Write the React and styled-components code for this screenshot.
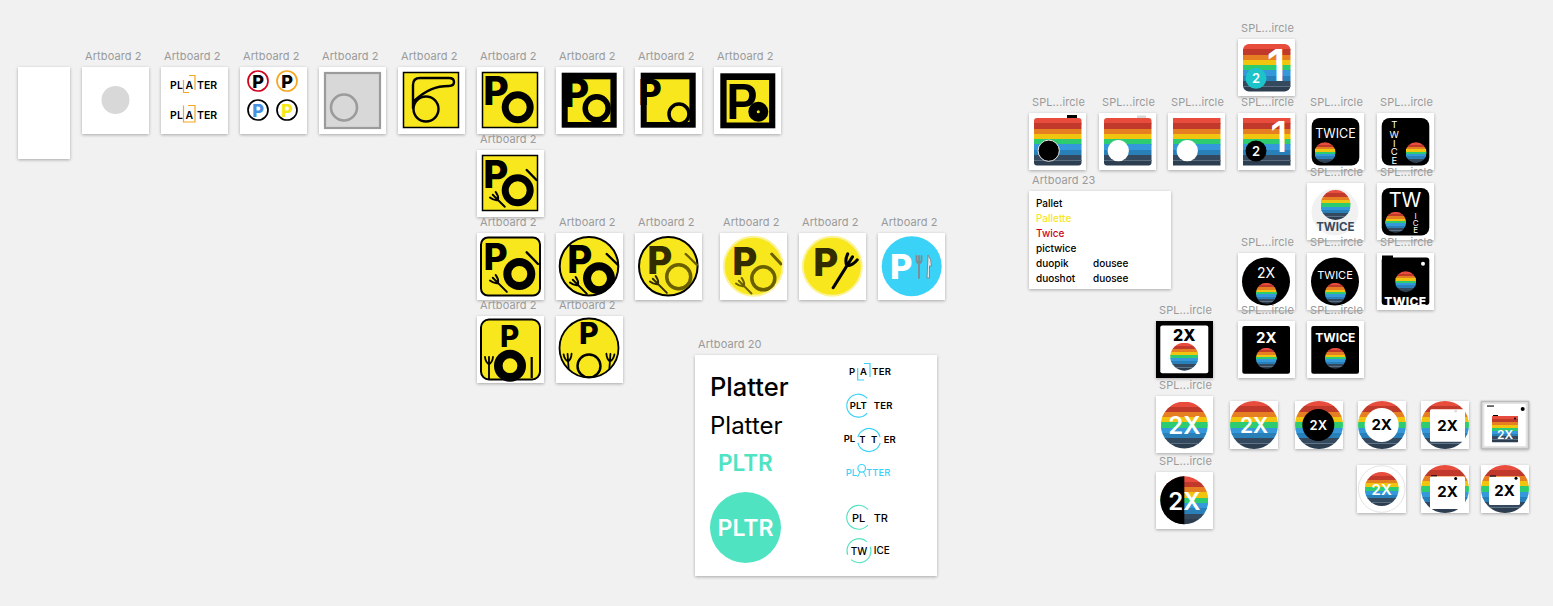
import React, { useId } from 'react';
import styled, { createGlobalStyle } from 'styled-components';

const Y = '#f8e71c';
const K = '#000';
const OL = '#6b6000';
const DK = '#332c00';
const TEAL = '#50e3c2';
const CY = '#3ad3f7';
const BANDS = ['#e74c3c', '#c0392b', '#e67e22', '#f1c40f', '#2ecc71', '#3498db', '#2980b9', '#34495e', '#2c3e50'];

const Global = createGlobalStyle`
  html, body { margin: 0; padding: 0; background: #f1f1f1; overflow: hidden; }
  body { font-family: Inter, "Noto Sans", sans-serif; }
`;

const Canvas = styled.main`
  position: relative;
  width: 1553px;
  height: 606px;
  background: #f1f1f1;
  overflow: hidden;
`;

const Board = styled.section`
  position: absolute;
  left: ${(p) => p.$x}px;
  top: ${(p) => p.$y}px;
  width: ${(p) => p.$w}px;
  height: ${(p) => p.$h}px;
  background: ${(p) => p.$bg || '#fff'};
  box-shadow: 0 1px 3px rgba(0, 0, 0, 0.3);
`;

const Label = styled.span`
  position: absolute;
  left: 3px;
  bottom: 100%;
  margin-bottom: 4px;
  font-size: 11px;
  line-height: 13px;
  letter-spacing: 0.1px;
  white-space: nowrap;
  color: #9a9a9a;
`;

const Art = styled.svg`
  display: block;
  width: 100%;
  height: 100%;
  overflow: visible;
`;

const Ink = styled.text`
  font-family: ${(p) => p.$family || 'Inter, "Noto Sans", sans-serif'};
`;

const Names = styled.div`
  display: grid;
  grid-template-columns: 57px 1fr;
  grid-auto-rows: 15px;
  padding: 5px 7px;
  font-size: 10px;
  line-height: 15px;
  font-weight: 500;
  color: #000;
`;

const Name = styled.span`
  grid-column: ${(p) => (p.$solo ? '1 / -1' : 'auto')};
  color: ${(p) => p.$color || '#000'};
`;

const Sheet = styled.div`
  display: grid;
  grid-template-columns: 130px 112px;
  height: 100%;
`;

const Wordmarks = styled.div`
  display: flex;
  flex-direction: column;
  align-items: flex-start;
  padding: 18px 0 0 15px;
`;

const Word = styled.div`
  font-size: ${(p) => p.$size}px;
  font-weight: ${(p) => p.$weight};
  line-height: 28px;
  color: #000;
  margin-bottom: ${(p) => p.$after}px;
`;

const Short = styled.div`
  font-size: 22.5px;
  font-weight: 600;
  line-height: 26px;
  color: ${TEAL};
  margin: 0 0 16px 8px;
`;

const Badge = styled.div`
  width: 71px;
  height: 71px;
  border-radius: 50%;
  background: ${TEAL};
  color: #fff;
  display: flex;
  align-items: center;
  justify-content: center;
  font-size: 23px;
  font-weight: 600;
`;

const Mark = ({ x, cy, size, weight = 600, fill = K, anchor = 'middle', children, spacing }) => (
  <Ink x={x} y={cy + size * 0.364} fontSize={size} fontWeight={weight} fill={fill} textAnchor={anchor} letterSpacing={spacing}>
    {children}
  </Ink>
);

const Pee = ({ x, top, h, fill = K, weight = 800 }) => {
  const size = h / 0.727;
  return (
    <Ink x={x - size * 0.07} y={top + h} fontSize={size} fontWeight={weight} fill={fill}>
      P
    </Ink>
  );
};

const Stripes = ({ x, w, top, h, clip }) => (
  <g clipPath={`url(#${clip})`} shapeRendering="crispEdges">
    {BANDS.map((c, i) => (
      <rect key={c} x={x} y={top + (i * h) / 9} width={w} height={h / 9 + 0.5} fill={c} />
    ))}
    <rect x={x} y={top + (8 * h) / 9 - 0.3} width={w} height={0.6} fill="#8aa0b0" opacity={0.5} />
  </g>
);

const useClip = () => useId().replace(/[^a-zA-Z0-9]/g, '') + 'c';

const Disc = ({ cx, cy, r }) => {
  const id = useClip();
  return (
    <>
      <clipPath id={id}>
        <circle cx={cx} cy={cy} r={r} />
      </clipPath>
      <Stripes x={cx - r} w={r * 2} top={cy - r} h={r * 2} clip={id} />
    </>
  );
};

const Strip = ({ x = 5, y = 5, w = 47.5, h = 47.5, rx = 0 }) => {
  const id = useClip();
  return (
    <>
      <clipPath id={id}>
        <rect x={x} y={y} width={w} height={h} rx={rx} />
      </clipPath>
      <Stripes x={x} w={w} top={y} h={h} clip={id} />
    </>
  );
};

const Fork = ({ x, y, rot, s = 1, c = K, w = 1.9, len = 11 }) => (
  <g transform={`translate(${x} ${y}) rotate(${rot}) scale(${s})`} fill="none" stroke={c} strokeWidth={w} strokeLinecap="round">
    <path d={`M-4 -6 Q-3.5 -1 0 1.5 Q3.5 -1 4 -6 M0 -6 V${len}`} />
  </g>
);

const Knife = ({ x1, y1, x2, y2, c = K, w = 2.4 }) => (
  <line x1={x1} y1={y1} x2={x2} y2={y2} stroke={c} strokeWidth={w} strokeLinecap="round" />
);

const Svg = ({ w = 67, h = 67, children }) => <Art viewBox={`0 0 ${w} ${h}`}>{children}</Art>;

const YBox = ({ x = 5.5, y = 5.5, s = 55, stroke = 1.5, rx = 0 }) => (
  <rect x={x} y={y} width={s} height={s} rx={rx} fill={Y} stroke={K} strokeWidth={stroke} />
);

const Clipped = ({ shape, children }) => {
  const id = useClip();
  return (
    <>
      <clipPath id={id}>{shape}</clipPath>
      <g clipPath={`url(#${id})`}>{children}</g>
    </>
  );
};

/* ---- first row ---- */
const GrayDot = () => (
  <Svg>
    <circle cx={33.5} cy={33} r={14} fill="#d8d8d8" />
  </Svg>
);

const Plater = () => (
  <Svg>
    {[0, 30].map((d) => (
      <g key={d}>
        <Mark x={9} cy={18 + d} size={10.5} anchor="start" spacing={0.3}>PL</Mark>
        <Mark x={28.3} cy={18 + d} size={10.5}>A</Mark>
        <Mark x={36} cy={18 + d} size={10.5} anchor="start">TER</Mark>
      </g>
    ))}
    <path d="M22.5 13 V25.5 H28 M28 8.5 H34 V23" fill="none" stroke="#f5a623" strokeWidth={1.2} />
    <path d="M22.5 38.5 V55 H34 V38.5 H27" fill="none" stroke="#f5a623" strokeWidth={1.2} />
  </Svg>
);

const FourP = () => (
  <Svg>
    {[
      [18, 14, '#d0021b', K],
      [47, 14, '#f5a623', K],
      [18, 43, K, '#4a90e2'],
      [47, 43, K, Y],
    ].map(([x, y, s, f]) => (
      <g key={`${x}${y}`}>
        <circle cx={x} cy={y} r={10} fill="#fff" stroke={s} strokeWidth={1.7} />
        <Mark x={x} cy={y} size={18} weight={800} fill={f}>P</Mark>
      </g>
    ))}
  </Svg>
);

const GrayBox = () => (
  <Svg>
    <rect x={6} y={6} width={55} height={55} fill="#d8d8d8" stroke="#9b9b9b" strokeWidth={2.2} />
    <circle cx={25} cy={40.5} r={13} fill="none" stroke="#9b9b9b" strokeWidth={2.6} />
  </Svg>
);

const Swoosh = () => (
  <Svg>
    <YBox />
    <path d="M15 41 V18 Q15 11 22 11 H51 Q56 11 56 15 Q56 19 51 19 C38 19 28 23 16 34" fill="none" stroke={K} strokeWidth={2.4} strokeLinecap="round" />
    <circle cx={28} cy={42} r={12.5} fill="none" stroke={K} strokeWidth={2.4} />
  </Svg>
);

const PO = () => (
  <Svg>
    <YBox />
    <Pee x={9} top={9.6} h={28.5} />
    <circle cx={40.7} cy={40.3} r={12.5} fill="none" stroke={K} strokeWidth={7} />
  </Svg>
);

const BlackFrame = ({ x = 5.7, y = 5.7, s = 55, inX = 11.7, inY = 12.3, inS = 42.7, children }) => (
  <>
    <rect x={x} y={y} width={s} height={s} fill={K} />
    <rect x={inX} y={inY} width={inS} height={inS} fill={Y} />
    {children}
  </>
);

const POFramed = () => (
  <Svg>
    <BlackFrame>
      <Pee x={10} top={11} h={29} />
      <Clipped shape={<rect x={5.7} y={5.7} width={55} height={55} />}>
        <circle cx={40.7} cy={41.3} r={11.5} fill={Y} stroke={K} strokeWidth={5.5} />
      </Clipped>
    </BlackFrame>
  </Svg>
);

const PODrop = () => (
  <Svg>
    <BlackFrame>
      <Pee x={6} top={12} h={26} />
      <Clipped shape={<rect x={5.7} y={5.7} width={55} height={55} />}>
        <circle cx={44} cy={47} r={10} fill={Y} stroke={K} strokeWidth={3.5} />
      </Clipped>
    </BlackFrame>
  </Svg>
);

const PDot = () => (
  <Svg>
    <BlackFrame x={6.3} y={6.3} inX={12.6} inY={13} inS={42.5}>
      <Ink x={11} y={52} fontSize={50} fontWeight={700} fill={K} transform="translate(2.2 0) scale(.93 1)" $family='"Liberation Sans", sans-serif'>P</Ink>
      <circle cx={44.3} cy={44.7} r={10} fill={K} />
      <circle cx={44.3} cy={44.7} r={1.5} fill={Y} />
    </BlackFrame>
  </Svg>
);

const POKnife = () => (
  <Svg>
    <YBox />
    <Pee x={9} top={10} h={28} />
    <circle cx={40.7} cy={40.3} r={12.5} fill="none" stroke={K} strokeWidth={7} />
    <Knife x1={49.7} y1={20} x2={59.5} y2={30} />
    <Fork x={20} y={49} rot={-45} />
  </Svg>
);

const RoundSquare = () => (
  <Svg>
    <rect x={4} y={4.5} width={59} height={58} rx={7} fill={Y} stroke={K} strokeWidth={2} />
    <Pee x={9} top={10} h={27} />
    <circle cx={42.3} cy={41} r={12} fill="none" stroke={K} strokeWidth={8} />
    <Knife x1={49.7} y1={19.3} x2={61} y2={31} />
    <Fork x={20} y={49} rot={-45} len={14} />
  </Svg>
);

const RoundDisc = () => (
  <Svg>
    <circle cx={33} cy={33.3} r={29.3} fill={Y} stroke={K} strokeWidth={2} />
    <Clipped shape={<circle cx={33} cy={33.3} r={30} />}>
      <Pee x={14} top={12} h={28} />
      <circle cx={43} cy={45.3} r={12} fill="none" stroke={K} strokeWidth={8} />
      <Knife x1={50.7} y1={21} x2={62} y2={32} />
      <Fork x={21} y={51} rot={-45} len={14} />
    </Clipped>
  </Svg>
);

const RoundOlive = () => (
  <Svg>
    <circle cx={33.3} cy={33.3} r={29.3} fill={Y} stroke={K} strokeWidth={2} />
    <Clipped shape={<circle cx={33.3} cy={33.3} r={30} />}>
      <Pee x={15} top={13} h={28} fill={DK} />
      <circle cx={43.7} cy={43.7} r={12} fill="none" stroke={OL} strokeWidth={3.5} />
      <Knife x1={50.7} y1={21} x2={62} y2={32} c={OL} />
      <Fork x={22} y={50} rot={-45} len={14} c={DK} />
    </Clipped>
  </Svg>
);

const HaloOlive = () => (
  <Svg>
    <circle cx={33.3} cy={33.3} r={29.5} fill={Y} stroke="#fbf39a" strokeWidth={2} />
    <Clipped shape={<circle cx={33.3} cy={33.3} r={29} />}>
      <Pee x={15} top={14} h={28} fill={DK} />
      <circle cx={43.3} cy={45.3} r={11.5} fill="none" stroke={OL} strokeWidth={3.5} />
      <Knife x1={51.7} y1={21} x2={61} y2={31} c={OL} w={3} />
      <Fork x={23} y={52} rot={-45} len={12} c={OL} />
    </Clipped>
  </Svg>
);

const HaloFork = () => (
  <Svg>
    <circle cx={33.3} cy={33.3} r={29.5} fill={Y} stroke="#fbf39a" strokeWidth={2} />
    <Pee x={17} top={15} h={28} fill={DK} />
    <Fork x={49} y={31} rot={32} c={K} w={2.2} s={1.4} len={20} />
  </Svg>
);

const BlueDisc = () => (
  <Svg>
    <circle cx={33.7} cy={33.3} r={30} fill={CY} />
    <Pee x={14.5} top={21} h={25} fill="#fff" />
    <g fill="none" stroke="#7d8b90" strokeWidth={1.8} strokeLinecap="round">
      <path d="M38.5 23 V27 Q38.5 30 41 30 Q43.5 30 43.5 27 V23 M41 23 V45" />
    </g>
    <path d="M50 22 Q53.5 26 53.5 33 H51.5 V45 H49 Z" fill="#dfe7ea" stroke="#7d8b90" strokeWidth={1} />
  </Svg>
);

const PlateSquare = () => (
  <Svg>
    <rect x={4} y={3.5} width={59} height={60} rx={8} fill={Y} stroke={K} strokeWidth={2} />
    <Pee x={25} top={9} h={21.5} />
    <Fork x={12} y={47} rot={0} w={1.8} len={16} />
    <line x1={54.7} y1={41} x2={54.7} y2={62} stroke={K} strokeWidth={2.2} />
    <circle cx={33} cy={49.7} r={11.7} fill={Y} stroke={K} strokeWidth={8.6} />
  </Svg>
);

const PlateDisc = () => (
  <Svg>
    <circle cx={33} cy={32} r={29.5} fill={Y} stroke={K} strokeWidth={1.8} />
    <Clipped shape={<circle cx={33} cy={32} r={30} />}>
      <Pee x={25} top={6} h={22} />
      <circle cx={33} cy={50} r={11.5} fill="none" stroke={K} strokeWidth={2.4} />
      <Fork x={12} y={44} rot={-4} w={1.8} len={18} />
      <Fork x={54} y={44} rot={4} w={1.8} len={18} />
    </Clipped>
  </Svg>
);

/* ---- splash studies ---- */
const S = ({ children, size = 57 }) => <Svg w={size} h={size}>{children}</Svg>;

const CamBlack = () => (
  <S>
    <rect x={38} y={2} width={10} height={4} fill={K} />
    <Strip rx={3} />
    <circle cx={19.7} cy={37.7} r={10.6} fill={K} stroke="#fff" strokeWidth={0.9} />
  </S>
);
const CamWhite = () => (
  <S>
    <rect x={38} y={2.5} width={9} height={4} fill="#d8d8d8" />
    <Strip rx={3} />
    <circle cx={19.3} cy={37.7} r={10.6} fill="#fff" />
  </S>
);
const FlatWhite = () => (
  <S>
    <Strip />
    <circle cx={19.3} cy={37.7} r={10.6} fill="#fff" />
  </S>
);
const OneTwo = ({ teal, rx = 0 }) => (
  <S>
    <Strip rx={rx} />
    <Mark x={teal ? 38 : 41} cy={teal ? 25.5 : 23.5} size={teal ? 44 : 42} weight={teal ? 600 : 500} fill="#fff">1</Mark>
    <circle cx={18} cy={teal ? 39.3 : 38} r={10.5} fill={teal ? '#1cc4c9' : K} />
    <Mark x={18} cy={teal ? 39.3 : 38} size={13} fill="#fff">2</Mark>
  </S>
);
const TwiceRow = () => (
  <S>
    <rect x={4.7} y={5} width={47.6} height={47.6} rx={8} fill={K} />
    <Mark x={28.5} cy={20} size={12.5} weight={400} fill="#fff">TWICE</Mark>
    <Disc cx={18} cy={39.7} r={10.5} />
  </S>
);
const TwiceCol = () => (
  <S>
    <rect x={4.7} y={5} width={47.6} height={47.6} rx={8} fill={K} />
    {[['T', 12], ['W', 22], ['I', 30.3], ['C', 38.7], ['E', 47.7]].map(([l, y]) => (
      <Mark key={l} x={17.3} cy={y} size={9.5} weight={400} fill="#fff">{l}</Mark>
    ))}
    <Disc cx={39} cy={39.7} r={10.5} />
  </S>
);
const TwiceSoft = () => (
  <S>
    <circle cx={28} cy={29} r={23.5} fill="#f1f1f1" />
    <Disc cx={28.5} cy={22} r={15} />
    <Mark x={28.3} cy={44.3} size={11.5} weight={700} fill="#34495e">TWICE</Mark>
  </S>
);
const TwStack = () => (
  <S>
    <rect x={4.7} y={5} width={47.6} height={47.6} rx={8} fill={K} />
    <Mark x={28} cy={17} size={20} weight={400} fill="#fff">TW</Mark>
    <Disc cx={18.7} cy={39.3} r={10.5} />
    {[['I', 33.5], ['C', 40], ['E', 47]].map(([l, y]) => (
      <Mark key={l} x={38.7} cy={y} size={8} weight={400} fill="#fff">{l}</Mark>
    ))}
  </S>
);
const CircleBlack = ({ word, size, cy, weight = 400 }) => (
  <S>
    <circle cx={28} cy={28.5} r={24} fill={K} />
    <Mark x={28} cy={cy} size={size} weight={weight} fill="#fff">{word}</Mark>
    <Clipped shape={<circle cx={28} cy={28.5} r={24} />}>
      <Disc cx={28.3} cy={40.3} r={10.5} />
    </Clipped>
  </S>
);
const CamTwice = () => (
  <S>
    <rect x={5} y={2.5} width={11} height={4} fill={K} />
    <rect x={4.7} y={4.5} width={47.6} height={47.6} rx={3} fill={K} />
    <circle cx={46} cy={10.7} r={2} fill="#fff" />
    <Disc cx={28.7} cy={28.7} r={10.5} />
    <Mark x={28.3} cy={48.7} size={12} weight={800} fill="#fff" spacing={0.3}>TWICE</Mark>
  </S>
);
const SquareBlack = ({ word, size, cy }) => (
  <S>
    <rect x={4.3} y={5} width={47.7} height={47.7} rx={2} fill={K} />
    <Mark x={28.3} cy={cy} size={size} weight={700} fill="#fff">{word}</Mark>
    <Disc cx={28.3} cy={37.3} r={10.5} />
  </S>
);
const InvFrame = () => (
  <S>
    <rect width={57} height={57} fill={K} />
    <rect x={4.3} y={4.6} width={48} height={47.6} rx={2} fill="#fff" />
    <Mark x={28.3} cy={14} size={16} weight={800} fill={K}>2X</Mark>
    <Disc cx={28.3} cy={35.7} r={14} />
  </S>
);
const BigDisc = () => (
  <S>
    <Disc cx={28.3} cy={29} r={23.5} />
    <Mark x={28.3} cy={29.5} size={24} weight={600} fill="#fff">2X</Mark>
  </S>
);
const HalfDisc = () => (
  <S>
    <Disc cx={28.3} cy={28.3} r={24} />
    <path d="M28.3 4.3 A24 24 0 0 0 28.3 52.3 Z" fill={K} />
    <Mark x={28.3} cy={29} size={24} weight={600} fill="#fff">2X</Mark>
  </S>
);
const D48 = ({ children }) => (
  <Svg w={48} h={48}>
    <Disc cx={24} cy={24} r={24} />
    {children}
  </Svg>
);
const WhiteCard = ({ x = 9, y = 8.3, w = 35, h = 32.4, bump, dot = '#ddd', dx = 34.7, dy = 13, word = 15, cy = 25 }) => (
  <>
    {bump && <rect x={x + 1} y={y - 1.2} width={6} height={1.4} fill={K} />}
    <rect x={x} y={y} width={w} height={h} rx={1.5} fill="#fff" />
    <circle cx={dx} cy={dy - 3} r={1.5} fill={dot} />
    <Mark x={x + w / 2} cy={cy} size={word} weight={700}>2X</Mark>
  </>
);
const Nested = () => (
  <Svg w={48} h={48}>
    <rect x={0.5} y={0.5} width={47} height={47} fill="#e4e4e4" stroke="#bdbdbd" strokeWidth={1.5} />
    <rect x={3.3} y={3} width={41.4} height={42} rx={1.5} fill="#fff" />
    <rect x={6} y={4.5} width={7} height={1.1} fill={K} />
    <circle cx={41.7} cy={8} r={2} fill={K} />
    <rect x={12} y={14} width={5} height={1} fill={K} />
    <Strip x={10.7} y={15} w={26.6} h={26.3} rx={1} />
    <circle cx={34} cy={17.5} r={1} fill={K} />
    <Mark x={24} cy={33.6} size={12} weight={600} fill="#fff">2X</Mark>
  </Svg>
);

const Artboard = ({ x, y, w = 57, h = 57, label, bg, children }) => (
  <Board $x={x} $y={y} $w={w} $h={h} $bg={bg}>
    {label && <Label>{label}</Label>}
    {children}
  </Board>
);

const AB = 'Artboard 2';
const SP = 'SPL...ircle';

const yellowBoards = [
  [82, 67, GrayDot], [161, 67, Plater], [240, 67, FourP], [319, 67, GrayBox], [398, 67, Swoosh],
  [477, 67, PO], [556, 67, POFramed], [635, 67, PODrop], [714, 67, PDot],
  [477, 150, POKnife],
  [477, 233, RoundSquare], [556, 233, RoundDisc], [635, 233, RoundOlive], [720, 233, HaloOlive], [799, 233, HaloFork], [878, 233, BlueDisc],
  [477, 316, PlateSquare], [556, 316, PlateDisc],
];

const PlatterMarks = () => (
  <Art viewBox="130 0 112 221">
    <Mark x={154} cy={17} size={9.5} anchor="start">P</Mark>
    <Mark x={168.5} cy={17} size={9.5}>A</Mark>
    <Mark x={177} cy={17} size={9.5} anchor="start" spacing={0.4}>TER</Mark>
    <path d="M162.7 13 V25 H169 M169 8.5 H175 V22" fill="none" stroke={CY} strokeWidth={1.2} />

    <circle cx={163.3} cy={50.7} r={11.5} fill="none" stroke={CY} strokeWidth={1.2} pathLength={100} strokeDasharray="78 22" transform="rotate(40 163.3 50.7)" />
    <Mark x={163.3} cy={51} size={9.5}>PLT</Mark>
    <Mark x={178.7} cy={51} size={9.5} anchor="start" spacing={0.3}>TER</Mark>

    <Mark x={148.7} cy={84} size={9.5} anchor="start">PL</Mark>
    <circle cx={174} cy={85} r={11.5} fill="none" stroke={CY} strokeWidth={1.2} pathLength={100} strokeDasharray="42 8" transform="rotate(14 174 85)" />
    <Mark x={174} cy={85} size={9.5} spacing={1.5}>T T</Mark>
    <Mark x={188.7} cy={85} size={9.5} anchor="start">ER</Mark>

    <Mark x={150.7} cy={118} size={9.5} weight={500} fill={CY} anchor="start">PL</Mark>
    <circle cx={166.7} cy={113.3} r={3.8} fill="none" stroke={CY} strokeWidth={1.2} />
    <path d="M165 117 L162.5 122 M168.5 117 L171 122" fill="none" stroke={CY} strokeWidth={1} />
    <Mark x={171} cy={118} size={9.5} weight={500} fill={CY} anchor="start">TTER</Mark>

    <circle cx={163.7} cy={162.3} r={12} fill="none" stroke={TEAL} strokeWidth={1.1} pathLength={100} strokeDasharray="78 22" transform="rotate(40 163.7 162.3)" />
    <Mark x={163.7} cy={162.5} size={11} weight={500}>PL</Mark>
    <Mark x={178.7} cy={162.5} size={11} weight={500} anchor="start">TR</Mark>

    <circle cx={164} cy={195.7} r={12} fill="none" stroke={TEAL} strokeWidth={1.1} pathLength={100} strokeDasharray="42 8" transform="rotate(-20 164 195.7)" />
    <Mark x={164} cy={196} size={10} weight={500}>TW</Mark>
    <Mark x={178.7} cy={195} size={10} weight={500} anchor="start">ICE</Mark>
  </Art>
);

export default function App() {
  return (
    <Canvas>
      <Global />
      <Artboard x={18} y={67} w={52} h={92} />
      {yellowBoards.map(([x, y, Pic]) => (
        <Artboard key={`${x}-${y}`} x={x} y={y} w={67} h={67} label={AB}>
          <Pic />
        </Artboard>
      ))}

      <Artboard x={695} y={355} w={242} h={221} label="Artboard 20">
        <Sheet>
          <Wordmarks>
            <Word $size={25.5} $weight={500} $after={11}>Platter</Word>
            <Word $size={24} $weight={400} $after={10}>Platter</Word>
            <Short>PLTR</Short>
            <Badge>PLTR</Badge>
          </Wordmarks>
          <PlatterMarks />
        </Sheet>
      </Artboard>

      <Artboard x={1238} y={39} label={SP}><OneTwo teal rx={6} /></Artboard>
      <Artboard x={1029} y={113} label={SP}><CamBlack /></Artboard>
      <Artboard x={1099} y={113} label={SP}><CamWhite /></Artboard>
      <Artboard x={1168} y={113} label={SP}><FlatWhite /></Artboard>
      <Artboard x={1238} y={113} label={SP}><OneTwo /></Artboard>
      <Artboard x={1307} y={113} label={SP}><TwiceRow /></Artboard>
      <Artboard x={1377} y={113} label={SP}><TwiceCol /></Artboard>
      <Artboard x={1307} y={183} label={SP}><TwiceSoft /></Artboard>
      <Artboard x={1377} y={183} label={SP}><TwStack /></Artboard>

      <Artboard x={1029} y={191} w={142} h={98} label="Artboard 23">
        <Names>
          <Name $solo>Pallet</Name>
          <Name $solo $color={Y}>Pallette</Name>
          <Name $solo $color="#d0021b">Twice</Name>
          <Name $solo>pictwice</Name>
          <Name>duopik</Name>
          <Name>dousee</Name>
          <Name>duoshot</Name>
          <Name>duosee</Name>
        </Names>
      </Artboard>

      <Artboard x={1238} y={253} label={SP}><CircleBlack word="2X" size={14} cy={20.3} /></Artboard>
      <Artboard x={1307} y={253} label={SP}><CircleBlack word="TWICE" size={11} cy={22} /></Artboard>
      <Artboard x={1377} y={253} label={SP}><CamTwice /></Artboard>
      <Artboard x={1238} y={321} label={SP}><SquareBlack word="2X" size={15} cy={16.7} /></Artboard>
      <Artboard x={1307} y={321} label={SP}><SquareBlack word="TWICE" size={12} cy={16.7} /></Artboard>
      <Artboard x={1156} y={321} label={SP}><InvFrame /></Artboard>
      <Artboard x={1156} y={396} label={SP}><BigDisc /></Artboard>
      <Artboard x={1156} y={472} label={SP}><HalfDisc /></Artboard>

      <Artboard x={1230} y={401} w={48} h={48}>
        <D48><Mark x={24} cy={24.5} size={21} weight={600} fill="#fff">2X</Mark></D48>
      </Artboard>
      <Artboard x={1295} y={401} w={48} h={48}>
        <D48>
          <circle cx={23.3} cy={24} r={16} fill={K} />
          <Mark x={23.3} cy={24} size={13} fill="#fff">2X</Mark>
        </D48>
      </Artboard>
      <Artboard x={1358} y={401} w={48} h={48}>
        <D48>
          <circle cx={23.7} cy={24} r={17} fill="#fff" />
          <Mark x={23.7} cy={24} size={15} weight={700}>2X</Mark>
        </D48>
      </Artboard>
      <Artboard x={1421} y={401} w={48} h={48}>
        <D48><WhiteCard /></D48>
      </Artboard>
      <Artboard x={1481} y={401} w={48} h={48}><Nested /></Artboard>

      <Artboard x={1357} y={465} w={49} h={48}>
        <Svg w={49} h={48}>
          <circle cx={24.7} cy={24} r={23.3} fill="#fff" stroke="#e4e4e4" strokeWidth={1} />
          <Disc cx={24.7} cy={24} r={17} />
          <Mark x={24.7} cy={24.5} size={15} weight={600} fill="#fff">2X</Mark>
        </Svg>
      </Artboard>
      <Artboard x={1421} y={465} w={48} h={48}>
        <D48><WhiteCard y={11.5} h={32.5} bump dot={K} dy={16.5} cy={27} /></D48>
      </Artboard>
      <Artboard x={1481} y={465} w={48} h={48}>
        <D48><WhiteCard x={8} y={11.7} w={31} h={28.3} bump dot={K} dx={35} dy={16.3} cy={26} /></D48>
      </Artboard>
    </Canvas>
  );
}
